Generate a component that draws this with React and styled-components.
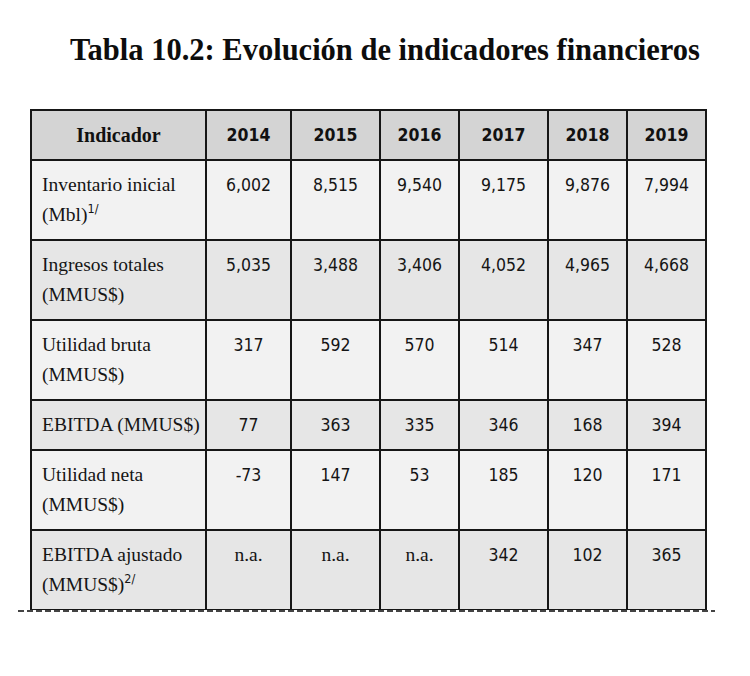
import React from "react";
import styled, { createGlobalStyle } from "styled-components";

const Global = createGlobalStyle`
  html, body { margin: 0; padding: 0; background: #ffffff; }
  * { box-sizing: border-box; }
`;

const Page = styled.div`
  width: 750px;
  height: 676px;
  padding-top: 32px;
  background: #ffffff;
  color: #111111;
  overflow: hidden;
`;

const Title = styled.h1`
  margin: 0 0 40px 0;
  padding-left: 20px;
  text-align: center;
  font-family: "Liberation Serif", serif;
  font-weight: 700;
  font-size: 30.5px;
  line-height: 37px;
  color: #0d0d0d;
`;

const Frame = styled.div`
  margin-left: 30px;
  width: 677px;
  height: 501px;
  overflow: hidden;
`;

const Table = styled.table`
  width: 677px;
  table-layout: fixed;
  border-collapse: separate;
  border-spacing: 0;
  border-top: 2px solid #161616;
  border-left: 2px solid #161616;
`;

const Cell = styled.td`
  border-right: 2px solid #161616;
  border-bottom: 2px solid #161616;
  padding: 9px ${(p) => (p.$label ? "0" : "4px")} 9px ${(p) => (p.$label ? "10px" : "4px")};
  vertical-align: top;
  white-space: nowrap;
  text-align: ${(p) => (p.$label ? "left" : "center")};
  line-height: 30px;
  font-family: ${(p) =>
    p.$num ? '"DejaVu Sans Condensed", "DejaVu Sans", sans-serif' : '"Liberation Serif", serif'};
  font-stretch: ${(p) => (p.$num ? "condensed" : "normal")};
  font-size: ${(p) => (p.$num ? "17.5px" : "19.5px")};
  color: #151515;
`;

const Head = styled.th`
  width: ${(p) => p.$w}px;
  border-right: 2px solid #161616;
  border-bottom: 2px solid #161616;
  padding: 9px 4px;
  background: #d4d4d4;
  text-align: center;
  line-height: 30px;
  font-weight: 700;
  font-family: ${(p) =>
    p.$num ? '"DejaVu Sans Condensed", "DejaVu Sans", sans-serif' : '"Liberation Serif", serif'};
  font-stretch: ${(p) => (p.$num ? "condensed" : "normal")};
  font-size: ${(p) => (p.$num ? "17.5px" : "20px")};
  color: #111111;
`;

const Row = styled.tr`
  background: ${(p) => (p.$shade ? "#e6e6e6" : "#f2f2f2")};
`;

const Note = styled.sup`
  font-family: "DejaVu Sans Condensed", "DejaVu Sans", sans-serif;
  font-size: 12.5px;
  line-height: 0;
  vertical-align: 8px;
`;

const Cut = styled.div`
  margin-left: 18px;
  width: 697px;
  height: 2px;
  background: repeating-linear-gradient(
    to right,
    #444444 0 6px,
    transparent 6px 9px
  );
`;

const years = ["2014", "2015", "2016", "2017", "2018", "2019"];
const widths = [175, 85, 89, 79, 89, 79, 79];

const rows = [
  { label: "Inventario inicial", unit: "(Mbl)", note: "1/", values: ["6,002", "8,515", "9,540", "9,175", "9,876", "7,994"] },
  { label: "Ingresos totales", unit: "(MMUS$)", values: ["5,035", "3,488", "3,406", "4,052", "4,965", "4,668"] },
  { label: "Utilidad bruta", unit: "(MMUS$)", values: ["317", "592", "570", "514", "347", "528"] },
  { label: "EBITDA (MMUS$)", values: ["77", "363", "335", "346", "168", "394"] },
  { label: "Utilidad neta", unit: "(MMUS$)", values: ["-73", "147", "53", "185", "120", "171"] },
  { label: "EBITDA ajustado", unit: "(MMUS$)", note: "2/", values: ["n.a.", "n.a.", "n.a.", "342", "102", "365"] },
];

export default function App() {
  return (
    <Page>
      <Global />
      <Title>Tabla 10.2: Evolución de indicadores financieros</Title>
      <Frame>
        <Table>
          <thead>
            <tr>
              <Head $w={widths[0]}>Indicador</Head>
              {years.map((y, i) => (
                <Head key={y} $w={widths[i + 1]} $num>
                  {y}
                </Head>
              ))}
            </tr>
          </thead>
          <tbody>
            {rows.map((r, ri) => (
              <Row key={r.label} $shade={ri % 2 === 1}>
                <Cell $label>
                  {r.label}
                  {r.unit && (
                    <>
                      <br />
                      {r.unit}
                      {r.note && <Note>{r.note}</Note>}
                    </>
                  )}
                </Cell>
                {r.values.map((v, vi) => (
                  <Cell key={vi} $num={v !== "n.a."}>
                    {v}
                  </Cell>
                ))}
              </Row>
            ))}
          </tbody>
        </Table>
      </Frame>
      <Cut />
    </Page>
  );
}
